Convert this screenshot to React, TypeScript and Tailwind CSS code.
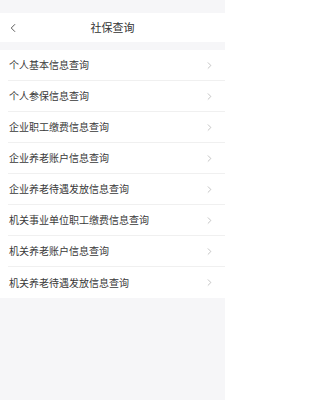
import { ChevronLeft, ChevronRight } from "lucide-react";

const items = [
  "个人基本信息查询",
  "个人参保信息查询",
  "企业职工缴费信息查询",
  "企业养老账户信息查询",
  "企业养老待遇发放信息查询",
  "机关事业单位职工缴费信息查询",
  "机关养老账户信息查询",
  "机关养老待遇发放信息查询",
];

export default function App() {
  return (
    <div
      className="min-h-[400px] w-[225px] bg-[#f6f6f8] text-[#333]"
      style={{ fontFamily: '"Noto Sans CJK SC", "Noto Sans", sans-serif' }}
    >
      {/* status bar */}
      <div className="h-[13px]" />

      {/* header */}
      <div className="relative flex h-[29px] items-center justify-center bg-white">
        <ChevronLeft className="absolute left-[6px] h-[14px] w-[14px] text-[#444]" strokeWidth={1.5} />
        <span className="text-[11px] text-[#333]">社保查询</span>
      </div>

      <div className="h-[8px]" />

      {/* list */}
      <ul className="bg-white pl-[8px]">
        {items.map((item, i) => (
          <li
            key={item}
            className={`flex h-[31px] items-center justify-between pl-[1px] pr-[10px] ${
              i < items.length - 1 ? "border-b border-[#f0f0f0]" : ""
            }`}
          >
            <span className="text-[10px] leading-none text-[#383838]">{item}</span>
            <ChevronRight className="h-[11px] w-[11px] text-[#aaa]" strokeWidth={1.5} />
          </li>
        ))}
      </ul>
    </div>
  );
}
